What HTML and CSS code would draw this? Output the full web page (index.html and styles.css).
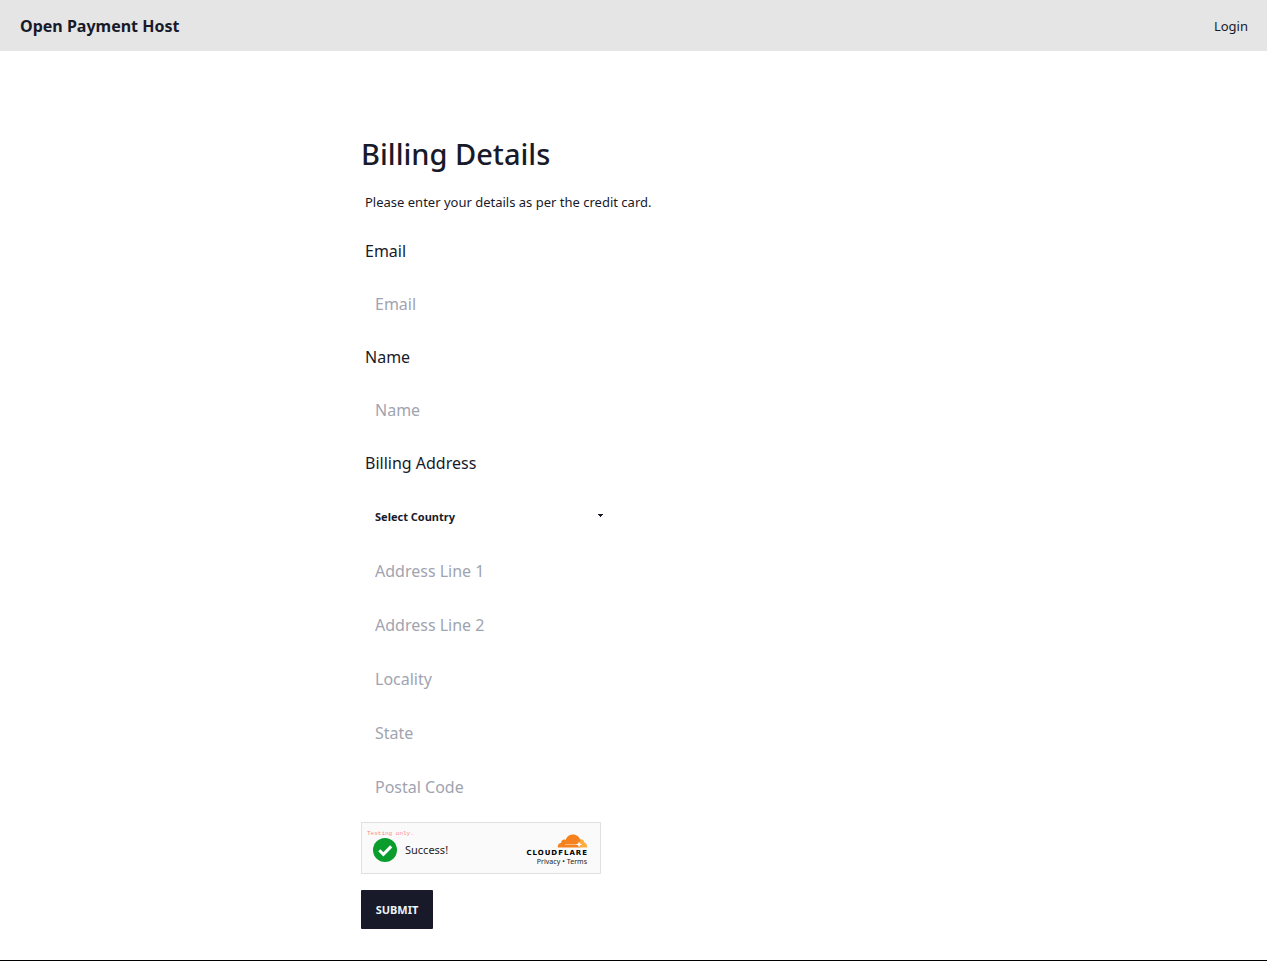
FILE: index.html
```
<!DOCTYPE html>
<html lang="en">
<head>
<meta charset="utf-8">
<meta name="viewport" content="width=device-width, initial-scale=1">
<title>Billing Details</title>
<link rel="stylesheet" href="styles.css">
</head>
<body>
<header class="navbar">
  <a class="brand" href="#">Open Payment Host</a>
  <a class="login" href="#">Login</a>
</header>
<main class="content">
  <h1 class="title">Billing Details</h1>
  <p class="intro">Please enter your details as per the credit card.</p>
  <form class="form">
    <label class="label" for="email">Email</label>
    <input class="field" id="email" type="email" placeholder="Email">
    <label class="label" for="name">Name</label>
    <input class="field" id="name" type="text" placeholder="Name">
    <label class="label" for="country">Billing Address</label>
    <select class="field select" id="country"><option>Select Country</option></select>
    <input class="field" type="text" placeholder="Address Line 1" aria-label="Address Line 1">
    <input class="field" type="text" placeholder="Address Line 2" aria-label="Address Line 2">
    <input class="field" type="text" placeholder="Locality" aria-label="Locality">
    <input class="field" type="text" placeholder="State" aria-label="State">
    <input class="field" type="text" placeholder="Postal Code" aria-label="Postal Code">
    <div class="turnstile">
      <div class="status">
        <span class="testing">Testing only.</span>
        <div class="result">
          <svg class="check" viewBox="0 0 24 24" aria-hidden="true"><circle cx="12" cy="12" r="12" fill="#0a9d2d"/><path d="M6.300 12.200l4.100 4.100 7.800-7.900" fill="none" stroke="#fff" stroke-width="3"/></svg>
          <span>Success!</span>
        </div>
      </div>
      <div class="provider">
        <svg class="cloud" viewBox="0 0 31 14" aria-hidden="true">
          <path d="M21.500 13.400L23 5.200c3.100-.2 4.100 1.400 4.300 3.200 1.900.4 3 2.300 2.900 5z" fill="#fbad41"/>
          <path d="M.8 13.400C.5 10.800 2 9 4.200 8.800 4 6.200 6.600 4.700 8.600 5.900 9.800 2.200 12.800.4 16 .4c3.700 0 6.500 2.300 7.300 5.600L22.500 13.400z" fill="#f6821f"/>
          <path d="M8 10.500h12" stroke="#fff" stroke-width=".7" opacity=".6"/>
          <path d="M22 7.400l.9 2.200 2.200.8-2.200.8-.9 2.200-.9-2.200-2.200-.8 2.200-.8z" fill="#fff"/>
        </svg>
        <span class="wordmark">CLOUDFLARE</span>
        <div class="links"><a href="#">Privacy</a><span>•</span><a href="#">Terms</a></div>
      </div>
    </div>
    <button class="submit" type="submit">SUBMIT</button>
  </form>
</main>
<footer class="footer"></footer>
</body>
</html>
```
FILE: styles.css
```
* { box-sizing: border-box; }
html, body { height: 100%; }
body {
  margin: 0;
  display: flex;
  flex-direction: column;
  background: #fff;
  color: #181a2a;
  font: 13px/20px "Noto Sans", sans-serif;
}
a { color: inherit; text-decoration: none; }
.navbar {
  display: flex;
  align-items: center;
  justify-content: space-between;
  min-height: 51px;
  padding: 0 19px 0 20px;
  background: #e5e5e5;
}
.brand { font-size: 16px; font-weight: 700; }
.content {
  flex: 1 0 auto;
  display: flex;
  flex-direction: column;
  width: 100%;
  max-width: 545px;
  margin: 0 auto;
  padding-top: 86px;
}
.title { margin: 0; font-size: 29px; line-height: 34px; font-weight: 500; }
.intro { margin: 16px 0; padding: 0 4px; line-height: 30px; }
.form { display: flex; flex-direction: column; align-items: flex-start; gap: 16px; }
.label { padding: 0 4px; font-size: 16px; line-height: 36px; }
.field {
  width: 260px;
  height: 38px;
  padding: 0 14px;
  border: 0;
  border-radius: 2px;
  background-color: #fff;
  color: inherit;
  font: 16px "Noto Sans", sans-serif;
}
.field::placeholder { color: #9fa4b0; opacity: 1; }
.select {
  appearance: none;
  height: 39px;
  font-size: 11px;
  font-weight: 700;
  background-image: linear-gradient(45deg, transparent 50%, currentColor 50%), linear-gradient(135deg, currentColor 50%, transparent 50%);
  background-position: 236px 17px, 239px 17px;
  background-size: 4px 3px;
  background-repeat: no-repeat;
}
.turnstile {
  display: flex;
  justify-content: space-between;
  width: 240px;
  height: 52px;
  padding: 0 12px 0 5px;
  border: 1px solid #e0e0e0;
  background: #fafafa;
}
.status { display: flex; flex-direction: column; padding-top: 7px; }
.testing { color: #f88; font: 6px/8px "Liberation Mono", monospace; }
.result { display: flex; align-items: center; gap: 8px; padding-left: 6px; font-size: 11px; color: #232323; }
.check { width: 24px; height: 24px; }
.provider { display: flex; flex-direction: column; align-items: flex-end; padding-top: 11px; }
.cloud { width: 31px; height: 14px; }
.wordmark { color: #000; font: 700 7px/10px "DejaVu Sans", sans-serif; letter-spacing: 1px; }
.links { display: flex; gap: 2px; padding-right: 1px; font-size: 7px; line-height: 8px; color: #232323; }
.submit {
  min-width: 72px;
  height: 39px;
  padding: 0 14px;
  border: 0;
  border-radius: 1px;
  background: #181a2a;
  color: #edf2f7;
  font: 700 11px "Noto Sans", sans-serif;
}
.footer { height: 1px; background: #000; }
```
